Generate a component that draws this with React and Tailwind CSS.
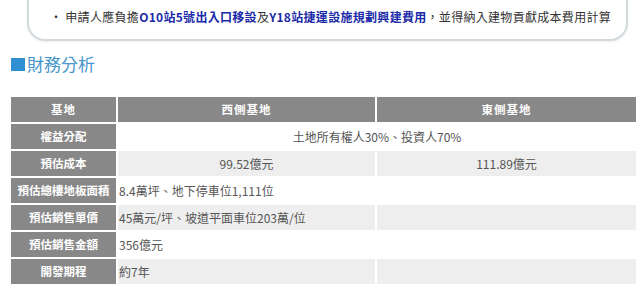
import React from "react";

const rows = [
  { label: "預估成本", west: "99.52億元", east: "111.89億元", center: true, shade: true },
  { label: "預估總樓地板面積", west: "8.4萬坪、地下停車位1,111位", east: "" },
  { label: "預估銷售單價", west: "45萬元/坪、坡道平面車位203萬/位", east: "", shade: true },
  { label: "預估銷售金額", west: "356億元", east: "" },
  { label: "開發期程", west: "約7年", east: "", shade: true },
];

const labelCell =
  "h-[25px] bg-[#888888] text-white font-bold text-[11.5px] text-center whitespace-nowrap p-0";

export default function App() {
  return (
    <div
      className="w-[640px] h-[287px] overflow-hidden bg-white"
      style={{ fontFamily: '"Noto Sans CJK TC", "Noto Sans", sans-serif' }}
    >
      <div className="-mt-[20px] ml-[27px] mr-[12px] pt-[25px] pb-[12px] pl-[21px] border-2 border-[#d3dadd] rounded-b-[18px] shadow-[0_1px_2px_rgba(0,0,0,0.08)]">
        <p className="text-[12px] tracking-[0.3px] leading-[20px] text-[#333] whitespace-nowrap">
          <span className="mr-[3px]">•</span>
          申請人應負擔
          <b className="text-[#1a2aa8]">O10站5號出入口移設</b>
          及
          <b className="text-[#1a2aa8]">Y18站捷運設施規劃興建費用</b>
          ，並得納入建物貢獻成本費用計算
        </p>
      </div>

      <h2 className="flex items-center mt-[11px] ml-[11px] text-[17px] leading-[24px] text-[#4596cc] font-normal">
        <span className="inline-block w-[14px] h-[13px] bg-[#2f8fd2] mr-[2px]" />
        財務分析
      </h2>

      <table className="mt-[19px] ml-[9px] border-separate border-spacing-[2px] text-[12px] text-[#555]">
        <colgroup>
          <col className="w-[105px]" />
          <col className="w-[257px]" />
          <col className="w-[259px]" />
        </colgroup>
        <thead>
          <tr>
            <th className={`${labelCell} tracking-[1px]`}>基地</th>
            <th className={`${labelCell} tracking-[1px]`}>西側基地</th>
            <th className={`${labelCell} tracking-[1px]`}>東側基地</th>
          </tr>
        </thead>
        <tbody>
          <tr>
            <td className={labelCell}>權益分配</td>
            <td colSpan={2} className="h-[25px] text-center p-0">
              土地所有權人30%、投資人70%
            </td>
          </tr>
          {rows.map((r) => (
            <tr key={r.label}>
              <td className={labelCell}>{r.label}</td>
              <td
                className={`h-[25px] p-0 px-[1px] whitespace-nowrap ${
                  r.center ? "text-center" : "text-left"
                } ${r.shade ? "bg-[#eeeeee]" : ""}`}
              >
                {r.west}
              </td>
              <td
                className={`h-[25px] p-0 text-center ${r.shade ? "bg-[#eeeeee]" : ""}`}
              >
                {r.east}
              </td>
            </tr>
          ))}
        </tbody>
      </table>
    </div>
  );
}
